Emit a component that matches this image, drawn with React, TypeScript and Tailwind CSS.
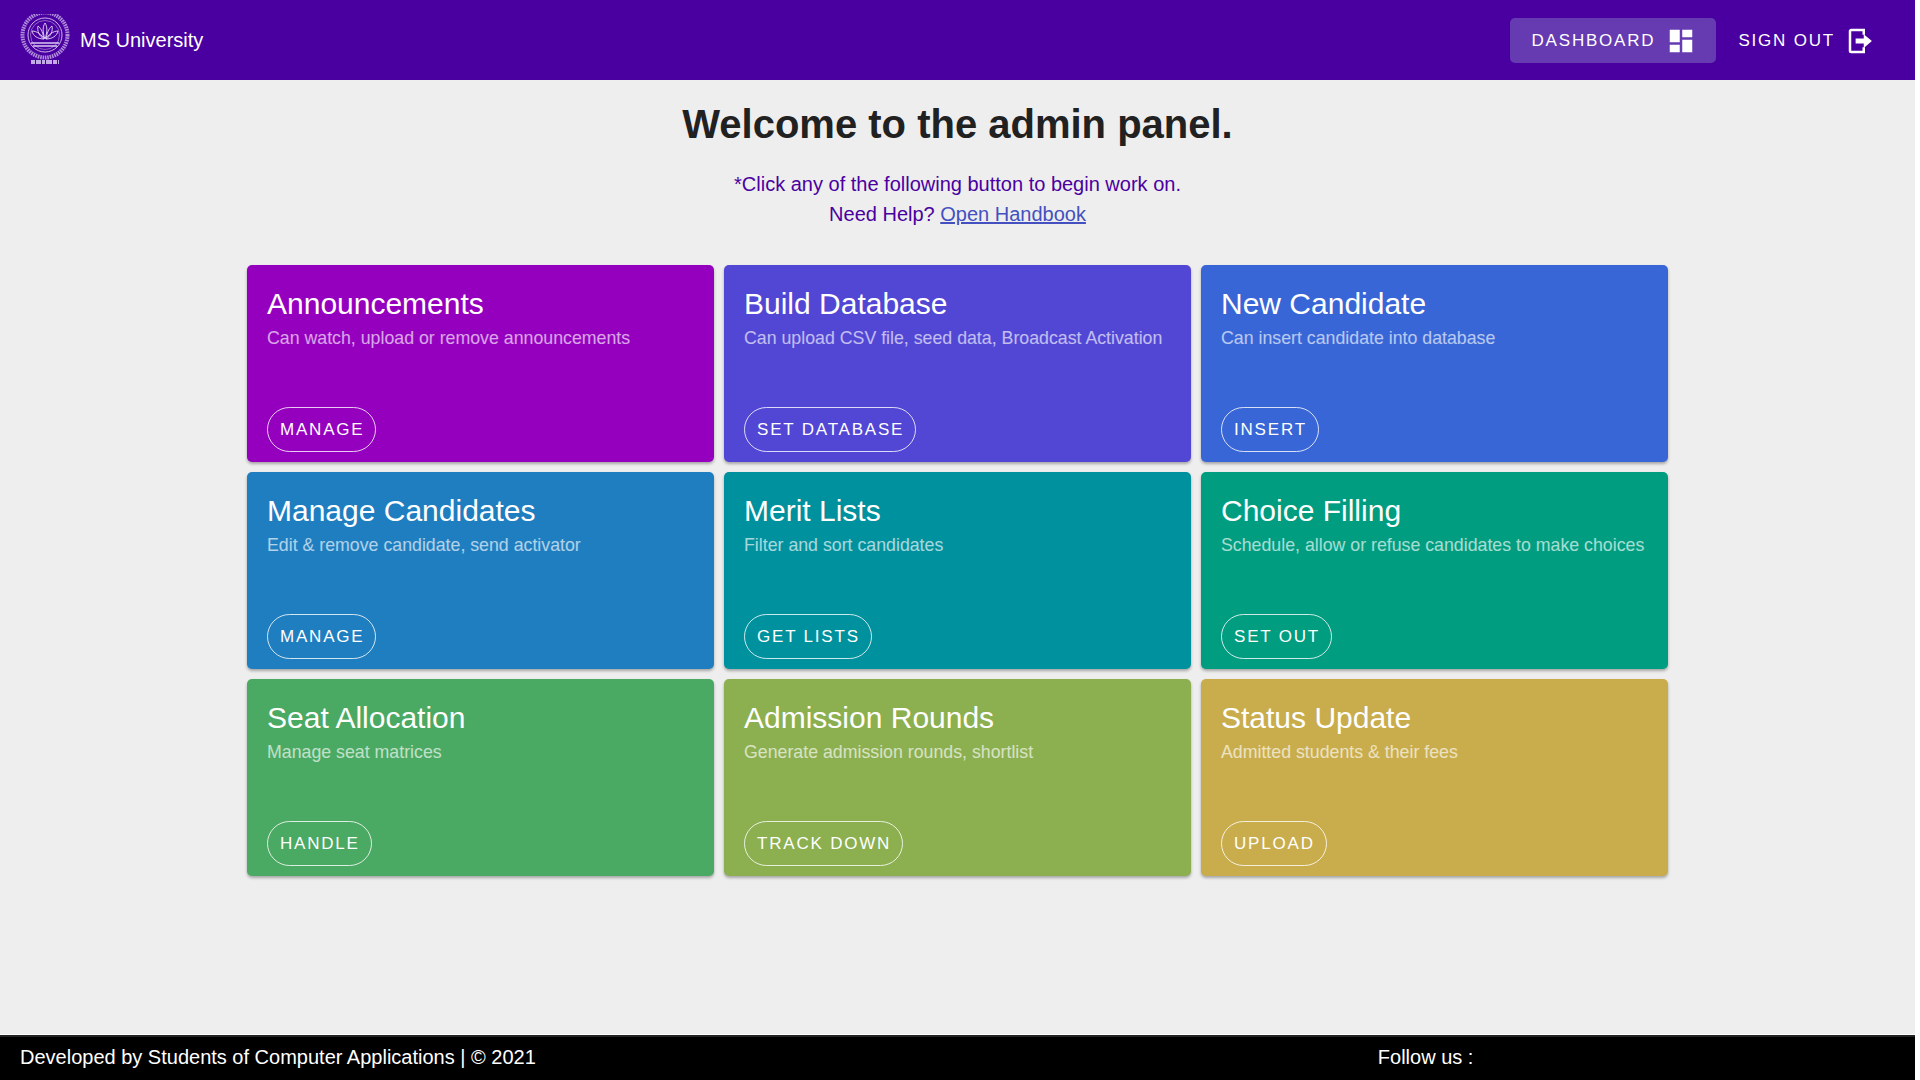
const CARDS = [
  { title: "Announcements", text: "Can watch, upload or remove announcements", action: "Manage", bg: "bg-[#9500bf]" },
  { title: "Build Database", text: "Can upload CSV file, seed data, Broadcast Activation", action: "Set Database", bg: "bg-[#5246d5]" },
  { title: "New Candidate", text: "Can insert candidate into database", action: "Insert", bg: "bg-[#3866d6]" },
  { title: "Manage Candidates", text: "Edit & remove candidate, send activator", action: "Manage", bg: "bg-[#1f7ec0]" },
  { title: "Merit Lists", text: "Filter and sort candidates", action: "Get Lists", bg: "bg-[#00919e]" },
  { title: "Choice Filling", text: "Schedule, allow or refuse candidates to make choices", action: "Set Out", bg: "bg-[#009d80]" },
  { title: "Seat Allocation", text: "Manage seat matrices", action: "Handle", bg: "bg-[#4aa962]" },
  { title: "Admission Rounds", text: "Generate admission rounds, shortlist", action: "Track Down", bg: "bg-[#8caf50]" },
  { title: "Status Update", text: "Admitted students & their fees", action: "Upload", bg: "bg-[#c9ad4c]" },
];

function Logo() {
  return (
    <svg viewBox="0 0 50 52" className="w-[50px] h-[52px]" fill="none" stroke="#d9c8f2">
      {/* outer ring with its lettering reduced to ticks */}
      <circle cx="25" cy="21" r="22.5" strokeWidth="4" strokeDasharray="1.6 0.8" opacity="0.7" />
      <circle cx="25" cy="21" r="17" strokeWidth="1" opacity="0.9" />
      <circle cx="25" cy="21" r="14.5" strokeWidth="0.8" opacity="0.6" />
      {/* lotus */}
      <path d="M25 9c-2.5 4-2.5 9 0 16 2.5-7 2.5-12 0-16zM18 12c-1 5 1 10 6 13-1-5-2-10-6-13zM32 12c1 5-1 10-6 13 1-5 2-10 6-13zM12 17c1 5 6 8 12 8-2-4-7-8-12-8zM38 17c-1 5-6 8-12 8 2-4 7-8 12-8z" strokeWidth="1" />
      <path d="M11 29h28M13 32h24" strokeWidth="1.3" />
      <path d="M11 48h28" strokeWidth="4" strokeDasharray="4 1 5 1 3 1 6 1" opacity="0.85" />
    </svg>
  );
}

function DashboardIcon() {
  return (
    <svg viewBox="0 0 24 24" className="w-[30px] h-[30px]" fill="currentColor">
      <path d="M3 13h8V3H3v10zm0 8h8v-6H3v6zm10 0h8V11h-8v10zm0-18v6h8V3h-8z" />
    </svg>
  );
}

function SignOutIcon() {
  return (
    <svg viewBox="0 0 24 24" className="w-[30px] h-[30px]" fill="none" stroke="currentColor">
      <path d="M15 7V3.2H5a1 1 0 0 0-1 1v15.6a1 1 0 0 0 1 1h10V17" strokeWidth="2" />
      <path d="M8.5 10H15V6.5l6.5 5.5-6.5 5.5V14H8.5z" fill="currentColor" stroke="none" />
    </svg>
  );
}

function Card({ title, text, action, bg }: (typeof CARDS)[number]) {
  return (
    <div className={`${bg} h-[197px] rounded-[5px] pt-5 px-5 pb-[10px] flex flex-col items-start text-white shadow-[0_2px_3px_rgba(0,0,0,0.3)]`}>
      <h5 className="text-[30px] leading-[38px]">{title}</h5>
      <p className="text-[17.76px] leading-[26px] mt-[2px] text-white/65 whitespace-nowrap">{text}</p>
      <button className="mt-auto h-[45px] pl-3 pr-[11px] rounded-full border border-white/80 text-white uppercase tracking-[1.8px] text-[17px]">
        {action}
      </button>
    </div>
  );
}

export default function App() {
  return (
    <div className="w-[1920px] h-[1080px] bg-white font-['Liberation_Sans',Arial,sans-serif]">
      <div className="w-[1915px] h-full bg-[#eeeeee] flex flex-col">
        <header className="h-20 shrink-0 bg-[#4a00a0] text-white flex items-center pl-5 pr-[25px]">
          <Logo />
          <span className="ml-[10px] text-[20px]">MS University</span>
          <div className="ml-auto flex items-center gap-[7px] uppercase text-[17px] tracking-[1.8px]">
            <button className="h-[45px] pl-[22px] pr-[20px] pt-px rounded-[5px] bg-[#663ab0] flex items-center gap-[11px] uppercase">
              Dashboard <DashboardIcon />
            </button>
            <button className="h-[45px] px-[15px] pt-px flex items-center gap-[10px] uppercase">
              Sign Out <SignOutIcon />
            </button>
          </div>
        </header>

        <main className="flex-1 flex flex-col items-center">
          <h1 className="mt-[21px] text-[40px] leading-[46px] font-bold text-[#212121]">Welcome to the admin panel.</h1>
          <p className="mt-[22px] text-[20px] leading-[30px] text-[#4a00a0] text-center">
            *Click any of the following button to begin work on.
            <br />
            Need Help? <a className="underline text-[#4450c0]">Open Handbook</a>
          </p>
          <div className="mt-[36px] w-[1421px] grid grid-cols-3 gap-x-[10px] gap-y-[10px]">
            {CARDS.map((c) => (
              <Card key={c.title} {...c} />
            ))}
          </div>
        </main>

        <footer className="h-[45px] shrink-0 bg-black text-white border-t-2 border-[#222] shadow-[0_-1px_0_#ffffff] flex items-center pl-5 pb-1 text-[20px]">
          <span>Developed by Students of Computer Applications | © 2021</span>
          <span className="ml-[842px]">Follow us :</span>
        </footer>
      </div>
    </div>
  );
}
